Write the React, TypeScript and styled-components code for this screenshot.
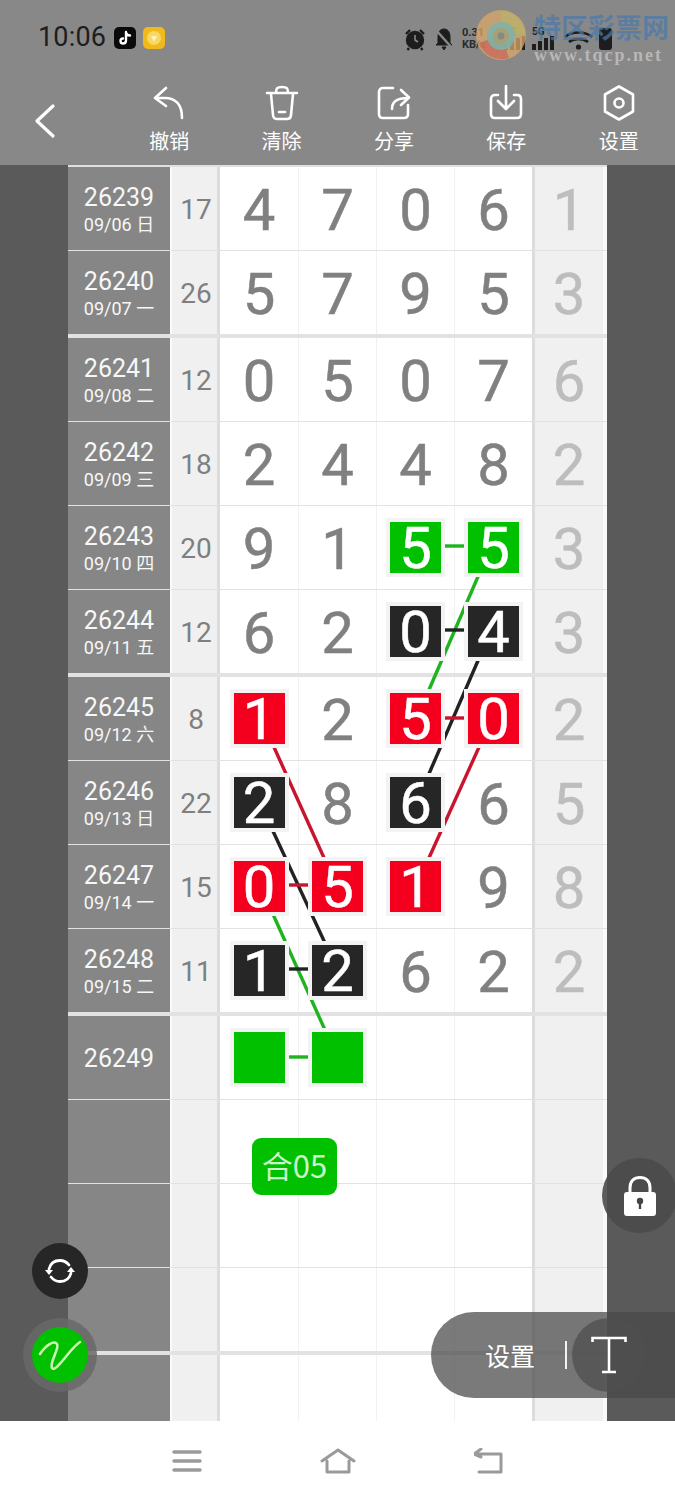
import styled, { createGlobalStyle } from 'styled-components';

type Mark = 'green' | 'black' | 'red';

interface RowData {
    id?: string;
    date?: string;
    sum?: number;
    digits?: number[];
    last?: number;
    marks?: { [col: number]: Mark };
    thick?: boolean;
}

const markColors: { [key in Mark]: string } = {
    green: '#00c000',
    black: '#262626',
    red: '#f4001e',
};

const lineColors: { [key in Mark]: string } = {
    green: '#1fb41f',
    black: '#222222',
    red: '#c9142f',
};

const rows: RowData[] = [
    { id: '26239', date: '09/06 日', sum: 17, digits: [4, 7, 0, 6], last: 1 },
    { id: '26240', date: '09/07 一', sum: 26, digits: [5, 7, 9, 5], last: 3, thick: true },
    { id: '26241', date: '09/08 二', sum: 12, digits: [0, 5, 0, 7], last: 6 },
    { id: '26242', date: '09/09 三', sum: 18, digits: [2, 4, 4, 8], last: 2 },
    { id: '26243', date: '09/10 四', sum: 20, digits: [9, 1, 5, 5], last: 3, marks: { 2: 'green', 3: 'green' } },
    { id: '26244', date: '09/11 五', sum: 12, digits: [6, 2, 0, 4], last: 3, marks: { 2: 'black', 3: 'black' }, thick: true },
    { id: '26245', date: '09/12 六', sum: 8, digits: [1, 2, 5, 0], last: 2, marks: { 0: 'red', 2: 'red', 3: 'red' } },
    { id: '26246', date: '09/13 日', sum: 22, digits: [2, 8, 6, 6], last: 5, marks: { 0: 'black', 2: 'black' } },
    { id: '26247', date: '09/14 一', sum: 15, digits: [0, 5, 1, 9], last: 8, marks: { 0: 'red', 1: 'red', 2: 'red' } },
    { id: '26248', date: '09/15 二', sum: 11, digits: [1, 2, 6, 2], last: 2, marks: { 0: 'black', 1: 'black' }, thick: true },
    { id: '26249', marks: { 0: 'green', 1: 'green' } },
    {},
    {},
    { thick: true },
    {},
];

// page coordinates, the svg viewBox below starts at the sheet corner
const links: { color: Mark; x1: number; y1: number; x2: number; y2: number }[] = [
    { color: 'green', x1: 480, y1: 572, x2: 428, y2: 692 },
    { color: 'black', x1: 480, y1: 656, x2: 428, y2: 776 },
    { color: 'red', x1: 480, y1: 745, x2: 428, y2: 860 },
    { color: 'red', x1: 273, y1: 745, x2: 325, y2: 860 },
    { color: 'black', x1: 272, y1: 829, x2: 325, y2: 943 },
    { color: 'green', x1: 272, y1: 912, x2: 325, y2: 1030 },
    { color: 'green', x1: 442, y1: 546, x2: 466, y2: 546 },
    { color: 'black', x1: 442, y1: 630, x2: 466, y2: 630 },
    { color: 'red', x1: 442, y1: 718, x2: 466, y2: 718 },
    { color: 'red', x1: 287, y1: 885, x2: 311, y2: 885 },
    { color: 'black', x1: 287, y1: 969, x2: 311, y2: 969 },
    { color: 'green', x1: 287, y1: 1057, x2: 311, y2: 1057 },
];

const GlobalStyle = createGlobalStyle`
    html, body {
        margin: 0;
        padding: 0;
        background: #fff;
    }
    * {
        box-sizing: border-box;
    }
`;

const Screen = styled.div`
    position: relative;
    width: 675px;
    height: 1500px;
    overflow: hidden;
    font-family: "Roboto", "Noto Sans CJK SC", sans-serif;
`;

const TopArea = styled.div`
    height: 165px;
    background: #888888;
    display: flex;
    flex-direction: column;
`;

const StatusBar = styled.div`
    height: 78px;
    display: flex;
    align-items: flex-start;
    padding: 24px 0 0 38px;
`;

const Clock = styled.div`
    font-size: 27px;
    line-height: 27px;
    color: #1d1d1d;
    width: 76px;
    letter-spacing: 0.2px;
`;

const AppIcon = styled.div<{ $bg: string }>`
    width: 22px;
    height: 22px;
    margin: 3px 7px 0 0;
    border-radius: 5px;
    background: ${(p) => p.$bg};
    display: flex;
    align-items: center;
    justify-content: center;
`;

const StatusRight = styled.div`
    margin-left: auto;
    display: flex;
    align-items: center;
    gap: 8px;
    padding: 2px 59px 0 0;
    color: #1d1d1d;
`;

const Speed = styled.div`
    font-size: 11px;
    line-height: 12px;
    font-weight: 700;
    width: 28px;
    color: #2a2a2a;
`;

const Watermark = styled.div`
    position: absolute;
    left: 475px;
    top: 9px;
    display: flex;
    gap: 7px;
`;

const WatermarkText = styled.div`
    display: flex;
    flex-direction: column;
    padding-top: 2px;
`;

const WatermarkTitle = styled.div`
    font-size: 27px;
    line-height: 31px;
    font-weight: 700;
    color: rgba(72, 122, 172, 0.72);
    font-family: "Noto Sans CJK SC", sans-serif;
    white-space: nowrap;
`;

const WatermarkUrl = styled.div`
    margin-top: 4px;
    font-family: "Liberation Serif", serif;
    font-size: 18px;
    line-height: 18px;
    font-weight: 700;
    letter-spacing: 2px;
    color: rgba(205, 205, 205, 0.7);
`;

const Toolbar = styled.div`
    flex: 1;
    display: flex;
`;

const BackButton = styled.div`
    width: 113px;
    padding: 25px 0 0 33px;
`;

const Tool = styled.div`
    width: 112.5px;
    display: flex;
    flex-direction: column;
    align-items: center;
    padding-top: 7px;
`;

const ToolLabel = styled.div`
    margin-top: 6px;
    font-size: 20px;
    line-height: 28px;
    color: #ffffff;
    font-family: "Noto Sans CJK SC", sans-serif;
`;

const Main = styled.div`
    height: 1256px;
    background: #5a5a5a;
    display: flex;
    justify-content: center;
    overflow: hidden;
`;

const Sheet = styled.div`
    position: relative;
    width: 539px;
    height: 1256px;
    padding-top: 2px;
    background: #e0e0e0;
    overflow: hidden;
`;

const Row = styled.div<{ $thick?: boolean }>`
    display: grid;
    grid-template-columns: 104px 48px repeat(4, 78px) 75px;
    height: ${(p) => (p.$thick ? 87 : 84)}px;
    border-bottom: ${(p) => (p.$thick ? 4 : 1)}px solid #e2e2e2;
`;

const Label = styled.div`
    background: #868686;
    border-right: 2px solid #fafafa;
    color: #f7f7f7;
    padding-top: 2px;
    display: flex;
    flex-direction: column;
    align-items: center;
    justify-content: center;
`;

const Issue = styled.div`
    font-size: 25px;
    line-height: 30px;
`;

const DateText = styled.div`
    font-size: 18px;
    line-height: 24px;
`;

const Sum = styled.div`
    background: #f0f0f0;
    border-right: 3px solid #dcdcdc;
    padding: 2px 0 0 3px;
    display: flex;
    align-items: center;
    justify-content: center;
    color: #7f7f7f;
    font-size: 28px;
`;

const Cell = styled.div<{ $first?: boolean }>`
    background: #ffffff;
    border-left: ${(p) => (p.$first ? 'none' : '1px solid #f1f1f1')};
    display: flex;
    align-items: center;
    justify-content: center;
`;

const Digit = styled.span`
    margin-top: 2px;
    font-size: 58px;
    line-height: 58px;
    color: #808080;
    -webkit-text-stroke: 0.5px #808080;
`;

const MarkBox = styled.div<{ $color: Mark }>`
    position: relative;
    z-index: 2;
    width: 51px;
    height: 51px;
    display: flex;
    align-items: center;
    justify-content: center;
    background: ${(p) => markColors[p.$color]};
    box-shadow: 0 0 0 4px #f3f3f3;
    color: #ffffff;
    font-size: 58px;
    line-height: 58px;
    -webkit-text-stroke: 0.5px #ffffff;
`;

const LastCell = styled.div`
    background: #f0f0f0;
    border-left: 3px solid #dcdcdc;
    border-right: 4px solid #fafafa;
    padding-top: 2px;
    display: flex;
    align-items: center;
    justify-content: center;
    color: #bdbdbd;
    font-size: 58px;
    line-height: 58px;
    -webkit-text-stroke: 0.5px #bdbdbd;
`;

const LinkLayer = styled.svg`
    position: absolute;
    left: 0;
    top: 0;
    z-index: 1;
    pointer-events: none;
`;

const SumBadge = styled.div`
    position: absolute;
    z-index: 3;
    left: 184px;
    top: 973px;
    width: 85px;
    height: 57px;
    border-radius: 9px;
    background: #00c000;
    color: #c9f5c9;
    font-size: 31px;
    line-height: 53px;
    text-align: center;
    font-family: "Noto Sans CJK SC", sans-serif;
`;

const RoundButton = styled.div<{ $bg: string; $x: number; $y: number }>`
    position: absolute;
    z-index: 5;
    left: ${(p) => p.$x - 28}px;
    top: ${(p) => p.$y - 28}px;
    width: 56px;
    height: 56px;
    border-radius: 50%;
    background: ${(p) => p.$bg};
    display: flex;
    align-items: center;
    justify-content: center;
`;

const PenButton = styled(RoundButton)`
    box-shadow: 0 0 0 9px rgba(105, 105, 105, 0.85);
`;

const LockButton = styled.div`
    position: absolute;
    z-index: 5;
    left: 602px;
    top: 1158px;
    width: 75px;
    height: 75px;
    border-radius: 50%;
    background: rgba(74, 74, 74, 0.9);
    display: flex;
    align-items: center;
    justify-content: center;
`;

const SettingsPill = styled.div`
    position: absolute;
    z-index: 5;
    left: 431px;
    top: 1312px;
    width: 244px;
    height: 86px;
    border-radius: 43px 0 0 43px;
    background: rgba(73, 73, 73, 0.73);
    display: flex;
    align-items: center;
    padding-left: 54px;
`;

const PillLabel = styled.div`
    font-size: 25px;
    color: #ffffff;
    width: 80px;
    font-family: "Noto Sans CJK SC", sans-serif;
`;

const PillDivider = styled.div`
    width: 2px;
    height: 28px;
    background: #f2f2f2;
`;

const PillIcon = styled.div`
    position: absolute;
    left: 141px;
    top: 6px;
    width: 74px;
    height: 74px;
    border-radius: 50%;
    background: rgba(79, 79, 79, 0.75);
    display: flex;
    align-items: center;
    justify-content: center;
`;

const NavBar = styled.div`
    height: 79px;
    background: #ffffff;
    display: flex;
    justify-content: center;
    align-items: center;
    gap: 118px;
    padding: 0 0 0 3px;
`;

const Toolicon = ({ children }: { children: React.ReactNode }) => (
    <svg width="36" height="36" viewBox="0 0 36 36" fill="none" stroke="#fff" strokeWidth="2.6" strokeLinecap="round" strokeLinejoin="round">
        {children}
    </svg>
);

const tools = [
    {
        label: '撤销',
        icon: <path d="M15 3 L4 13 L15 21 M4 13 H14 C24 13 31 19 31 33" />,
    },
    {
        label: '清除',
        icon: (
            <>
                <path d="M3 8 H33 M12 8 C12 3 13 2 18 2 C23 2 24 3 24 8" />
                <path d="M7 9 L9 30 C9.3 33 11 34 13 34 H23 C25 34 26.7 33 27 30 L29 9" />
                <path d="M15 27 H21" />
            </>
        ),
    },
    {
        label: '分享',
        icon: (
            <>
                <path d="M17 3 H7 C4.5 3 3 4.5 3 7 V29 C3 31.5 4.5 33 7 33 H28 C30.5 33 32 31.5 32 29 V20" />
                <path d="M16 24 C16 17 20 13 32 13 M25 5 L33 12.5 L25 20" />
            </>
        ),
    },
    {
        label: '保存',
        icon: (
            <>
                <path d="M10 10 H7 C4.5 10 3 11.5 3 14 V29 C3 31.5 4.5 33 7 33 H29 C31.5 33 33 31.5 33 29 V14 C33 11.5 31.5 10 29 10 H26" />
                <path d="M18 1 V23 M10 16 L18 24 L26 16" />
            </>
        ),
    },
    {
        label: '设置',
        icon: (
            <>
                <path d="M18 1.5 L32 9.5 V26.5 L18 34.5 L4 26.5 V9.5 Z" />
                <circle cx="18" cy="18" r="4.5" />
            </>
        ),
    },
];

const App = () => {
    return (
        <Screen>
            <GlobalStyle />
            <TopArea>
                <StatusBar>
                    <Clock>10:06</Clock>
                    <AppIcon $bg="#0a0a0a">
                        <svg width="16" height="16" viewBox="0 0 16 16" fill="none" stroke="#fff" strokeWidth="2.4" strokeLinecap="round">
                            <path d="M9 2 V10.5 C9 12.5 7.5 13.5 6 13.5 C4.5 13.5 3.5 12.4 3.5 11 C3.5 9.5 4.5 8.5 6 8.5 M9 2.5 C9.5 4.5 11 5.5 13 5.5" />
                        </svg>
                    </AppIcon>
                    <AppIcon $bg="#f2b91c">
                        <svg width="16" height="16" viewBox="0 0 16 16">
                            <circle cx="8" cy="8" r="7" fill="#f8d862" />
                            <path d="M5 6 L8 12 L11 6 Z" fill="#fff3c0" />
                        </svg>
                    </AppIcon>
                    <StatusRight>
                        <svg width="22" height="24" viewBox="0 0 22 24" fill="none" stroke="#1d1d1d" strokeWidth="2.4">
                            <circle cx="11" cy="13" r="8" fill="#1d1d1d" />
                            <path d="M11 8 V13 L14 15" stroke="#888" strokeWidth="1.6" />
                            <path d="M2 7 L6 3 M20 7 L16 3 M5 21 L3.5 23 M17 21 L18.5 23" />
                        </svg>
                        <svg width="20" height="24" viewBox="0 0 20 24" fill="#1d1d1d" stroke="#1d1d1d">
                            <path d="M10 2 C5.5 2 4 6 4 10 V16 L2 18 H18 L16 16 V10 C16 6 14.5 2 10 2 Z" />
                            <path d="M8 20 H12 L10 23 Z" />
                            <path d="M1 2 L19 22" stroke="#888" strokeWidth="2.5" />
                        </svg>
                        <Speed>
                            0.31
                            <br />
                            KB/s
                        </Speed>
                        <svg width="118" height="26" viewBox="0 0 118 26" fill="#1d1d1d">
                            <text x="6" y="9" fontSize="10" fontWeight="700">5G</text>
                            <rect x="6" y="18" width="4" height="6" />
                            <rect x="12" y="15" width="4" height="9" />
                            <rect x="18" y="12" width="4" height="12" />
                            <rect x="24" y="10" width="3" height="14" />
                            <text x="34" y="9" fontSize="10" fontWeight="700">5G</text>
                            <rect x="34" y="18" width="4" height="6" />
                            <rect x="40" y="15" width="4" height="9" />
                            <rect x="46" y="12" width="4" height="12" />
                            <rect x="52" y="10" width="4" height="14" />
                            <path d="M67 11 C74 5 87 5 94 11 M71 16 C76 12 85 12 90 16" fill="none" stroke="#1d1d1d" strokeWidth="2.6" />
                            <circle cx="80.5" cy="21" r="2.6" />
                            <rect x="101" y="2" width="13" height="22" rx="3" />
                        </svg>
                    </StatusRight>
                    <Watermark>
                        <svg width="52" height="52" viewBox="0 0 52 52" fill="none">
                            <circle cx="26" cy="26" r="25" fill="#d9a86a" opacity="0.75" />
                            <path d="M4 34 A24 24 0 0 0 34 49 L26 26 Z" fill="#c9675a" opacity="0.75" />
                            <path d="M26 2 A24 24 0 0 1 50 26 L26 26 Z" fill="#b4b46a" opacity="0.7" />
                            <circle cx="26" cy="27" r="14" fill="#7fb0a8" opacity="0.9" />
                            <circle cx="26" cy="27" r="8" fill="#a8a070" opacity="0.9" />
                            <circle cx="26" cy="27" r="3.5" fill="#888" />
                        </svg>
                        <WatermarkText>
                            <WatermarkTitle>特区彩票网</WatermarkTitle>
                            <WatermarkUrl>www.tqcp.net</WatermarkUrl>
                        </WatermarkText>
                    </Watermark>
                </StatusBar>
                <Toolbar>
                    <BackButton>
                        <svg width="24" height="36" viewBox="0 0 24 36" fill="none" stroke="#fff" strokeWidth="3.2" strokeLinecap="round" strokeLinejoin="round">
                            <path d="M20 3 L4 18 L20 33" />
                        </svg>
                    </BackButton>
                    {tools.map((tool) => (
                        <Tool key={tool.label}>
                            <Toolicon>{tool.icon}</Toolicon>
                            <ToolLabel>{tool.label}</ToolLabel>
                        </Tool>
                    ))}
                </Toolbar>
            </TopArea>
            <Main>
                <Sheet>
                    {rows.map((row, rowIndex) => (
                        <Row key={rowIndex} $thick={row.thick}>
                            <Label>
                                {row.id && <Issue>{row.id}</Issue>}
                                {row.date && <DateText>{row.date}</DateText>}
                            </Label>
                            <Sum>{row.sum}</Sum>
                            {[0, 1, 2, 3].map((col) => {
                                const mark = row.marks && row.marks[col];
                                const digit = row.digits && row.digits[col];
                                return (
                                    <Cell key={col} $first={col === 0}>
                                        {mark ? <MarkBox $color={mark}>{digit}</MarkBox> : <Digit>{digit}</Digit>}
                                    </Cell>
                                );
                            })}
                            <LastCell>{row.last}</LastCell>
                        </Row>
                    ))}
                    <LinkLayer width="539" height="1256" viewBox="68 165 539 1256">
                        {links.map((link, i) => (
                            <line key={i} x1={link.x1} y1={link.y1} x2={link.x2} y2={link.y2} stroke={lineColors[link.color]} strokeWidth="3.4" />
                        ))}
                    </LinkLayer>
                    <SumBadge>合05</SumBadge>
                </Sheet>
            </Main>
            <RoundButton $bg="#262626" $x={60} $y={1271}>
                <svg width="32" height="32" viewBox="0 0 32 32" fill="none" stroke="#fff" strokeWidth="2.8" strokeLinecap="round">
                    <path d="M5 14 C6.5 8 11 5.5 16 5.5 C20 5.5 23 7.5 25 10" />
                    <path d="M27 18 C25.5 24 21 26.5 16 26.5 C12 26.5 9 24.5 7 22" />
                    <path d="M1 15 L9 15 L5 20 Z" fill="#fff" stroke="none" />
                    <path d="M23 17 L31 17 L27 12 Z" fill="#fff" stroke="none" />
                </svg>
            </RoundButton>
            <PenButton $bg="#00c000" $x={60} $y={1355}>
                <svg width="46" height="40" viewBox="0 0 46 40" fill="none" stroke="#c9f5b0" strokeWidth="2.6" strokeLinecap="round">
                    <path d="M3 19 C9 10 17 5 20 9 C23 13 12 28 15 33 C17 36 22 30 27 24 C32 18 37 11 43 7" />
                </svg>
            </PenButton>
            <LockButton>
                <svg width="36" height="42" viewBox="0 0 36 42">
                    <path d="M8 19 V13 C8 6 12 2.5 18 2.5 C24 2.5 28 6 28 13 V19" fill="none" stroke="#fff" strokeWidth="3" />
                    <rect x="2" y="17" width="32" height="24" rx="3" fill="#fff" />
                    <circle cx="18" cy="26" r="3.2" fill="#444" />
                    <rect x="16.8" y="27" width="2.4" height="7" fill="#444" />
                </svg>
            </LockButton>
            <SettingsPill>
                <PillLabel>设置</PillLabel>
                <PillDivider />
                <PillIcon>
                    <svg width="36" height="38" viewBox="0 0 36 38" fill="none" stroke="#fff" strokeWidth="2.6">
                        <path d="M1.5 6 V2 H34.5 V6 M18 2 V36 M11 36 H25" />
                    </svg>
                </PillIcon>
            </SettingsPill>
            <NavBar>
                <svg width="30" height="24" viewBox="0 0 30 24" stroke="#9a9a9a" strokeWidth="3.4" strokeLinecap="round">
                    <path d="M2 3 H28 M2 12 H28 M2 21 H28" />
                </svg>
                <svg width="36" height="26" viewBox="0 0 36 26" fill="none" stroke="#9a9a9a" strokeWidth="3" strokeLinecap="round" strokeLinejoin="round">
                    <path d="M2 13 L18 2 L34 13 M7 13 V24 H29 V13" />
                </svg>
                <svg width="32" height="26" viewBox="2 0 32 26" fill="none" stroke="#9a9a9a" strokeWidth="3" strokeLinecap="round" strokeLinejoin="round">
                    <path d="M3 6 H29 V24 H7 M9 1 L2 6 L9 9" />
                </svg>
            </NavBar>
        </Screen>
    );
};

export default App;
